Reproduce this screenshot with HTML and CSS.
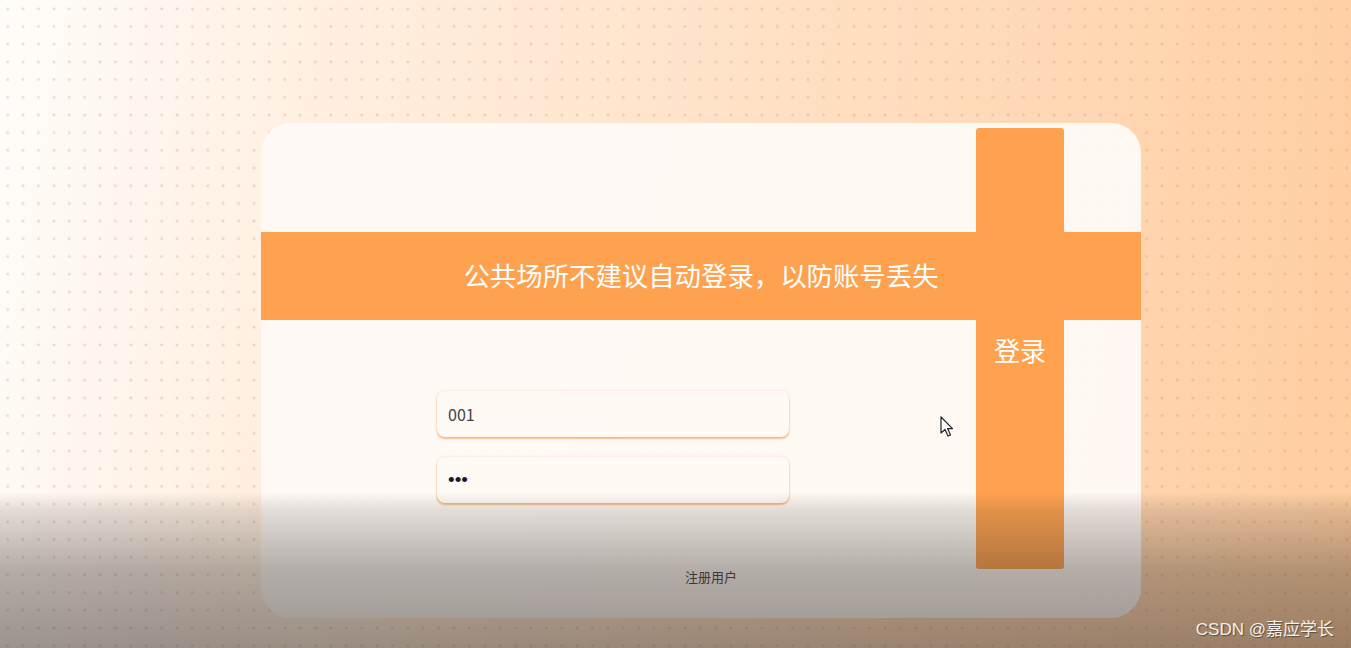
FILE: index.html
```html
<!DOCTYPE html>
<html lang="zh-CN">
<head>
    <meta charset="UTF-8">
    <meta name="viewport" content="width=device-width, initial-scale=1.0">
    <title>登录</title>
    <link rel="stylesheet" href="styles.css">
</head>
<body>
    <div class="page">
        <div class="login-card">
            <div class="notice">公共场所不建议自动登录，以防账号丢失</div>
            <div class="form">
                <input class="field" type="text" value="001">
                <input class="field pass" type="password" value="123">
            </div>
            <a class="register" href="#">注册用户</a>
            <button class="login-btn">登录</button>
        </div>
    </div>

    <svg class="cursor" width="14" height="22" viewBox="0 0 14 22">
        <path d="M1 1 L1 17 L5 13.5 L8 20 L10.5 19 L7.6 12.6 L12.5 12.6 Z" fill="#fff" stroke="#222" stroke-width="1.2" stroke-linejoin="round"/>
    </svg>
    <div class="shade"></div>
    <div class="watermark">CSDN @嘉应学长</div>
</body>
</html>
```

FILE: styles.css
```css
html, body {
    margin: 0;
    height: 100%;
    overflow: hidden;
}

body {
    font-family: "Noto Sans CJK SC", "Noto Sans", sans-serif;
    background-color: #ffe4cc;
    background-image:
        radial-gradient(circle, rgba(185, 135, 105, 0.28) 1.1px, transparent 1.8px),
        linear-gradient(100deg, #fffdfb 0%, #fff1e4 20%, #ffe0c4 55%, #ffcd9f 100%);
    background-size: 15.4px 17.7px, 100% 100%;
    background-position: 0px 0px, 0 0;
}

.page {
    padding-top: 123px;
    padding-left: 261px;
}

.login-card {
    position: relative;
    width: 880px;
    height: 495px;
    box-sizing: border-box;
    padding-top: 109px;
    border-radius: 30px;
    background-color: rgba(255, 251, 247, 0.93);
    overflow: hidden;
}

.notice {
    height: 88px;
    line-height: 86px;
    background-color: #ffa24f;
    color: #fff;
    font-size: 26.4px;
    text-align: center;
}

.form {
    display: flex;
    flex-direction: column;
    gap: 20px;
    width: 352px;
    margin: 71px 0 0 176px;
}

.field {
    height: 46px;
    box-sizing: border-box;
    padding: 0 11px;
    border: none;
    border-radius: 8px;
    background-color: #fffaf4;
    box-shadow: 0 2px 2px rgba(245, 145, 60, 0.6), 0 0 3px rgba(245, 170, 110, 0.35);
    font-family: inherit;
    font-size: 16px;
    color: #444;
    outline: none;
}

.field.pass {
    font-family: "Liberation Sans", sans-serif;
    font-size: 19px;
    color: #1a1a2a;
    letter-spacing: 0;
}

.register {
    display: block;
    width: 60px;
    margin: 64px 0 0 424px;
    font-size: 13px;
    color: #444;
    text-decoration: none;
}

.login-btn {
    position: absolute;
    top: 5px;
    left: 715px;
    width: 88px;
    height: 441px;
    padding: 203px 0 0;
    border: none;
    border-radius: 3px;
    background-color: #ffa24f;
    color: #fff;
    font-family: inherit;
    font-size: 26px;
    display: flex;
    justify-content: center;
    align-items: flex-start;
    cursor: pointer;
}

.cursor {
    position: absolute;
    top: 416px;
    left: 940px;
}

.shade {
    position: absolute;
    left: 0;
    right: 0;
    top: 492px;
    bottom: 0;
    background: linear-gradient(to bottom, rgba(45, 38, 34, 0) 0%, rgba(45, 38, 34, 0.14) 12%, rgba(45, 38, 34, 0.36) 50%, rgba(45, 38, 34, 0.48) 100%);
    pointer-events: none;
}

.watermark {
    position: absolute;
    right: 17px;
    bottom: 8px;
    font-family: "Liberation Sans", "Noto Sans CJK SC", sans-serif;
    font-size: 17px;
    color: #f4f0ec;
    text-shadow: 1px 1px 1px rgba(0, 0, 0, 0.45);
}
```
